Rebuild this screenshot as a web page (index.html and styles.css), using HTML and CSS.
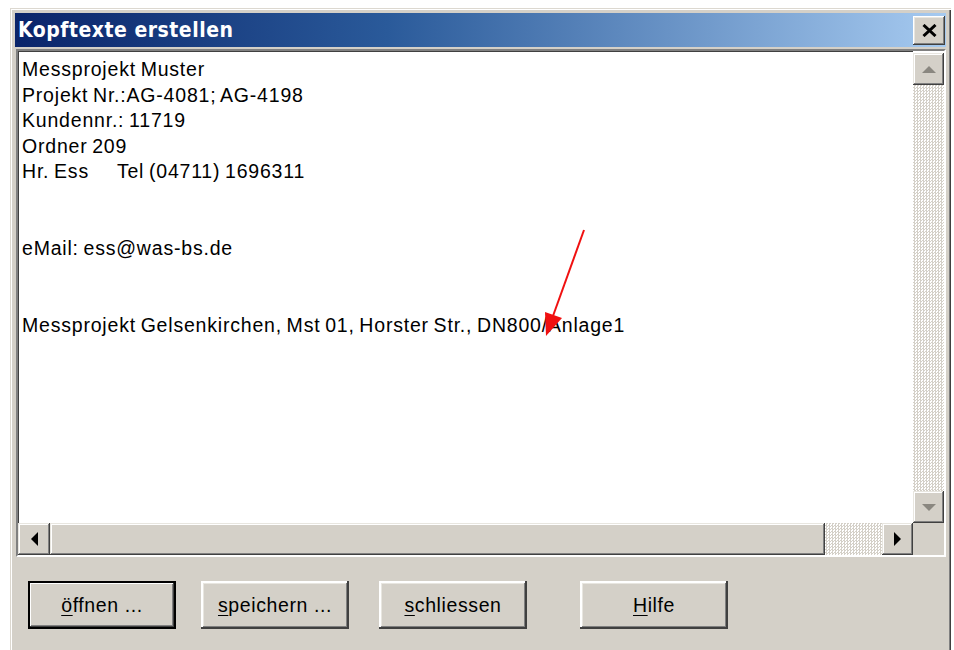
FILE: index.html
```html
<!DOCTYPE html>
<html lang="de">
<head>
<meta charset="utf-8">
<title>Kopftexte erstellen</title>
<link rel="stylesheet" href="styles.css">
</head>
<body>
<div class="window">
  <div class="titlebar">
    <span class="title">Kopftexte erstellen</span>
    <button class="close" type="button" aria-label="Schließen">
      <svg width="15" height="13" viewBox="0 0 15 13"><path d="M1.5 1 L13.5 12 M13.5 1 L1.5 12" stroke="#000" stroke-width="3"/></svg>
    </button>
  </div>

  <div class="edit">
    <div class="text">Messprojekt Muster
Projekt Nr.:AG-4081; AG-4198
Kundennr.: 11719
Ordner 209
Hr. Ess      Tel (04711) 1696311


eMail: ess@was-bs.de


Messprojekt Gelsenkirchen, Mst 01, Horster Str., DN800/Anlage1</div>

    <div class="vscroll">
      <div class="sbtn"><span class="tri up"></span></div>
      <div class="track"></div>
      <div class="sbtn"><span class="tri down"></span></div>
    </div>

    <div class="hscroll">
      <div class="sbtn"><span class="tri left"></span></div>
      <div class="thumb"></div>
      <div class="track"></div>
      <div class="sbtn"><span class="tri right"></span></div>
    </div>

    <div class="corner"></div>
  </div>

  <div class="buttons">
    <button class="btn default b1" type="button"><u>ö</u>ffnen ...</button>
    <button class="btn b2" type="button"><u>s</u>peichern ...</button>
    <button class="btn b3" type="button"><u>s</u>chliessen</button>
    <button class="btn b4" type="button"><u>H</u>ilfe</button>
  </div>
</div>

<svg class="pointer" width="954" height="650" viewBox="0 0 954 650">
  <line x1="584" y1="230" x2="553" y2="316" stroke="#f01010" stroke-width="2"/>
  <polygon points="546,336 545,312 562,318" fill="#f01010"/>
</svg>
</body>
</html>
```

FILE: styles.css
```css
html, body {
  margin: 0;
  padding: 0;
  background: #fff;
  width: 954px;
  height: 650px;
  overflow: hidden;
  font-family: "Liberation Sans", Arial, sans-serif;
}

.window {
  margin: 8px 0 0 10px;
  width: 941px;
  height: 650px;
  box-sizing: border-box;
  background: #d4d0c8;
  padding: 5px 5px 0 5px;
  box-shadow: inset 1px 1px #dcd8d0, inset 2px 2px #fff,
              inset -1px 0 #404040, inset -2px 0 #808080;
  display: flex;
  flex-direction: column;
}

.titlebar {
  height: 34px;
  background: linear-gradient(to right, #0a246a 0%, #2a5a9a 40%, #a6caf0 100%);
  display: flex;
  align-items: center;
  justify-content: space-between;
  padding: 0 1px 0 3px;
  flex: none;
}

.title {
  color: #fff;
  font-weight: bold;
  font-size: 21px;
  letter-spacing: 0.5px;
  font-family: "DejaVu Sans Condensed", "DejaVu Sans", sans-serif;
  font-stretch: condensed;
}

.close {
  width: 32px;
  height: 29px;
  padding: 0;
  border: 0;
  background: #d4d0c8;
  box-shadow: inset -1px -1px #404040, inset 1px 1px #fff,
              inset -2px -2px #808080, inset 2px 2px #e8e6e0;
  display: flex;
  align-items: center;
  justify-content: center;
}

.edit {
  margin: 2px 0 0 1px;
  height: 508px;
  flex: none;
  box-sizing: border-box;
  border-style: solid;
  border-width: 2px;
  border-color: #808080 #fff #fff #808080;
  box-shadow: inset 1px 1px #404040;
  display: grid;
  grid-template-columns: 1fr 31px;
  grid-template-rows: 1fr 32px;
  background: #fff;
}

.text {
  white-space: pre;
  overflow: hidden;
  font-size: 19.5px;
  line-height: 25.6px;
  color: #000;
  padding: 6px 0 0 4px;
  letter-spacing: 0.8px;
  word-spacing: -1.5px;
}

.vscroll {
  display: flex;
  flex-direction: column;
  padding-top: 2px;
  background: #fff;
}

.hscroll {
  display: flex;
  background: #d4d0c8;
}

.corner {
  background: #d4d0c8;
}

.track {
  flex: 1;
  background-color: #fff;
  background-image: conic-gradient(#d4d0c8 25%, #fff 0 50%, #d4d0c8 0 75%, #fff 0);
  background-size: 3px 3px;
}

.sbtn, .thumb {
  background: #d4d0c8;
  box-shadow: inset -1px -1px #404040, inset 1px 1px #e8e6e0,
              inset -2px -2px #808080, inset 2px 2px #fff;
  display: flex;
  align-items: center;
  justify-content: center;
  flex: none;
}

.vscroll .sbtn {
  height: 32px;
}

.hscroll .sbtn {
  width: 32px;
}

.hscroll .sbtn:last-child {
  width: 31px;
}

.thumb {
  width: 775px;
}

.tri {
  width: 0;
  height: 0;
  border-style: solid;
}

.tri.up {
  border-width: 0 7px 7px 7px;
  border-color: transparent transparent #8a8780 transparent;
}

.tri.down {
  border-width: 7px 7px 0 7px;
  border-color: #8a8780 transparent transparent transparent;
}

.tri.left {
  border-width: 7px 7px 7px 0;
  border-color: transparent #000 transparent transparent;
}

.tri.right {
  border-width: 7px 0 7px 7px;
  border-color: transparent transparent transparent #000;
}

.buttons {
  display: flex;
  padding-top: 24px;
}

.btn {
  width: 148px;
  height: 48px;
  box-sizing: border-box;
  padding: 0;
  border: 0;
  background: #d4d0c8;
  font-family: "Liberation Sans", Arial, sans-serif;
  font-size: 19.5px;
  letter-spacing: 0.6px;
  color: #000;
  box-shadow: inset -2px -2px #404040, inset 2px 2px #fff,
              inset -3px -3px #808080, inset 3px 3px #e8e6e0;
}

.btn u {
  text-underline-offset: 3px;
}

.btn.default {
  box-shadow: inset 0 0 0 2px #000, inset -3px -3px #404040, inset 3px 3px #fff,
              inset -4px -4px #808080;
}

.b1 { margin-left: 13px; }
.b2 { margin-left: 25px; }
.b3 { margin-left: 30px; }
.b4 { margin-left: 53px; }

.pointer {
  position: absolute;
  left: 0;
  top: 0;
  pointer-events: none;
}
```
